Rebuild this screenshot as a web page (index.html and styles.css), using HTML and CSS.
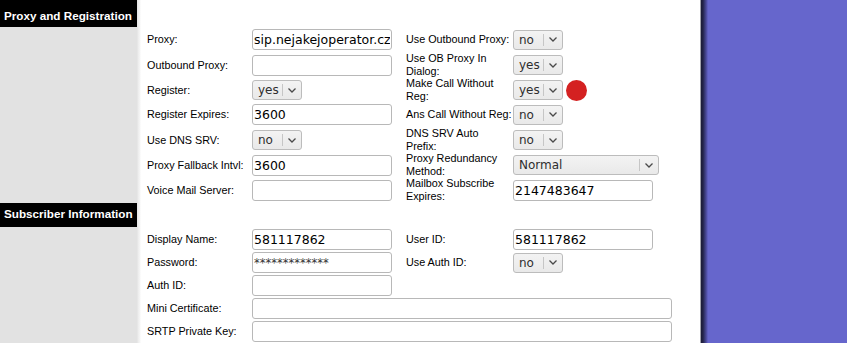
FILE: index.html
```html
<!DOCTYPE html>
<html lang="en">
<head>
  <meta charset="UTF-8">
  <title>Ext 1 - Proxy and Registration</title>
  <link rel="stylesheet" href="styles.css">
</head>
<body>
  <div class="page">
    <main class="content">
      <section class="section">
        <h2 class="section-title section-title-first">Proxy and Registration</h2>
        <div class="rows">
          <div class="row">
            <label>Proxy:</label>
            <input class="field" type="text" value="sip.nejakejoperator.cz">
            <label>Use Outbound Proxy:</label>
            <div class="select"><span class="select-value">no</span><span class="select-arrow"><svg width="8" height="5" viewBox="0 0 8 5"><path d="M0.5 0.5 L4 4 L7.5 0.5"/></svg></span></div>
          </div>
          <div class="row">
            <label>Outbound Proxy:</label>
            <input class="field" type="text" value="">
            <label>Use OB Proxy In<br>Dialog:</label>
            <div class="select"><span class="select-value">yes</span><span class="select-arrow"><svg width="8" height="5" viewBox="0 0 8 5"><path d="M0.5 0.5 L4 4 L7.5 0.5"/></svg></span></div>
          </div>
          <div class="row">
            <label>Register:</label>
            <div class="select"><span class="select-value">yes</span><span class="select-arrow"><svg width="8" height="5" viewBox="0 0 8 5"><path d="M0.5 0.5 L4 4 L7.5 0.5"/></svg></span></div>
            <label>Make Call Without<br>Reg:</label>
            <div class="control">
              <div class="select"><span class="select-value">yes</span><span class="select-arrow"><svg width="8" height="5" viewBox="0 0 8 5"><path d="M0.5 0.5 L4 4 L7.5 0.5"/></svg></span></div>
              <span class="mark"></span>
            </div>
          </div>
          <div class="row">
            <label>Register Expires:</label>
            <input class="field" type="text" value="3600">
            <label>Ans Call Without Reg:</label>
            <div class="select"><span class="select-value">no</span><span class="select-arrow"><svg width="8" height="5" viewBox="0 0 8 5"><path d="M0.5 0.5 L4 4 L7.5 0.5"/></svg></span></div>
          </div>
          <div class="row">
            <label>Use DNS SRV:</label>
            <div class="select"><span class="select-value">no</span><span class="select-arrow"><svg width="8" height="5" viewBox="0 0 8 5"><path d="M0.5 0.5 L4 4 L7.5 0.5"/></svg></span></div>
            <label>DNS SRV Auto<br>Prefix:</label>
            <div class="select"><span class="select-value">no</span><span class="select-arrow"><svg width="8" height="5" viewBox="0 0 8 5"><path d="M0.5 0.5 L4 4 L7.5 0.5"/></svg></span></div>
          </div>
          <div class="row">
            <label>Proxy Fallback Intvl:</label>
            <input class="field" type="text" value="3600">
            <label>Proxy Redundancy<br>Method:</label>
            <div class="select select-wide"><span class="select-value">Normal</span><span class="select-arrow"><svg width="8" height="5" viewBox="0 0 8 5"><path d="M0.5 0.5 L4 4 L7.5 0.5"/></svg></span></div>
          </div>
          <div class="row">
            <label>Voice Mail Server:</label>
            <input class="field" type="text" value="">
            <label>Mailbox Subscribe<br>Expires:</label>
            <input class="field" type="text" value="2147483647">
          </div>
        </div>
      </section>

      <section class="section section-next">
        <h2 class="section-title">Subscriber Information</h2>
        <div class="rows rows-tight">
          <div class="row">
            <label>Display Name:</label>
            <input class="field" type="text" value="581117862">
            <label>User ID:</label>
            <input class="field" type="text" value="581117862">
          </div>
          <div class="row">
            <label>Password:</label>
            <input class="field field-secret" type="text" value="*************">
            <label>Use Auth ID:</label>
            <div class="select"><span class="select-value">no</span><span class="select-arrow"><svg width="8" height="5" viewBox="0 0 8 5"><path d="M0.5 0.5 L4 4 L7.5 0.5"/></svg></span></div>
          </div>
          <div class="row">
            <label>Auth ID:</label>
            <input class="field" type="text" value="">
          </div>
          <div class="row">
            <label>Mini Certificate:</label>
            <input class="field field-wide" type="text" value="">
          </div>
          <div class="row">
            <label>SRTP Private Key:</label>
            <input class="field field-wide" type="text" value="">
          </div>
        </div>
      </section>
    </main>
    <div class="backdrop"></div>
  </div>
</body>
</html>
```

FILE: styles.css
```css
html, body {
  margin: 0;
  padding: 0;
  height: 100%;
  overflow: hidden;
}
body {
  font-family: "Liberation Sans", Arial, sans-serif;
  font-size: 10.8px;
  color: #000;
  background: #6666cc;
}
.page {
  display: flex;
  height: 100vh;
}
.content {
  box-sizing: border-box;
  width: 701px;
  flex: none;
  border-right: 1px solid #a2a2aa;
  background: #fff linear-gradient(to right, #e2e2e2 0, #e2e2e2 137px, #ececec 138px, #f6f6f6 140px, #fff 141px) no-repeat;
  background-size: 141px 100%;
}
.backdrop {
  flex: 1;
  background: linear-gradient(to right, #1c1c36 0, #24244a 2px, #3c3c7c 4px, #5654ae 6px, #6666cc 7px);
}

.section-title {
  box-sizing: border-box;
  width: 137px;
  height: 24px;
  margin: 0;
  padding: 2px 0 0 4px;
  background: #000;
  color: #fff;
  font-size: 11.7px;
  font-weight: bold;
  line-height: 18px;
  white-space: nowrap;
}
.section-title-first {
  height: 27px;
  padding-top: 7px;
}
.section-next {
  padding-top: 1px;
}
.rows-tight {
  padding-top: 1px;
}

.row {
  display: grid;
  grid-template-columns: 105px 154px 107px auto;
  align-items: center;
  height: 25px;
  padding-left: 147px;
}
.rows-tight .row {
  height: 23px;
}
.row label {
  line-height: 13px;
  white-space: nowrap;
}

.field {
  box-sizing: border-box;
  width: 140px;
  height: 21px;
  margin: 0;
  padding: 0 1px;
  border: 1px solid #b8b8b8;
  border-radius: 3px;
  background: #fff;
  font-family: "DejaVu Sans", sans-serif;
  font-size: 12.5px;
  color: #000;
  outline: none;
}
.field-secret {
  font-size: 11.5px;
  color: #333;
}
.field-wide {
  grid-column: 2 / 5;
  width: 420px;
}

.select {
  box-sizing: border-box;
  display: flex;
  align-items: stretch;
  width: 50px;
  height: 20px;
  border: 1px solid #bcbcbc;
  border-radius: 3px;
  background: linear-gradient(#f3f3f3, #e9e9e9);
  font-family: "DejaVu Sans", sans-serif;
  font-size: 12px;
  color: #2e2e2e;
}
.select-wide {
  width: 146px;
}
.select-value {
  flex: 1;
  padding-left: 5px;
  line-height: 18px;
}
.select-arrow {
  display: flex;
  align-items: center;
  justify-content: center;
  width: 18px;
  margin: 3px 0;
  border-left: 1px solid #c6c6c6;
}
.select-arrow svg {
  fill: none;
  stroke: #4a4a4a;
  stroke-width: 1.3;
}

.control {
  display: flex;
  align-items: center;
  gap: 3px;
}
.mark {
  width: 21px;
  height: 21px;
  border-radius: 50%;
  background: #d42121;
}
```
